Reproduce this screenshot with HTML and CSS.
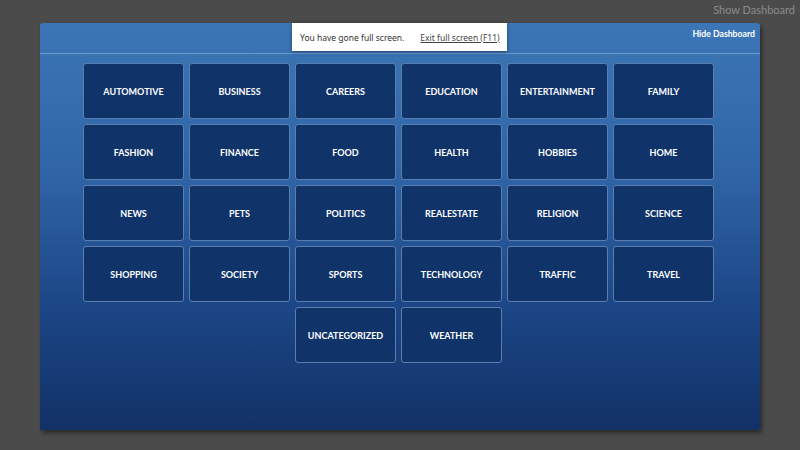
FILE: index.html
```html
<!DOCTYPE html>
<html>
<head>
<meta charset="utf-8">
<link rel="stylesheet" href="styles.css">
</head>
<body>
<div class="topbar"><span class="show">Show Dashboard</span></div>
<div class="panel">
  <div class="header"><span class="hide">Hide Dashboard</span></div>
  <div class="grid">
    <div class="tile">AUTOMOTIVE</div>
    <div class="tile">BUSINESS</div>
    <div class="tile">CAREERS</div>
    <div class="tile">EDUCATION</div>
    <div class="tile">ENTERTAINMENT</div>
    <div class="tile">FAMILY</div>
    <div class="tile">FASHION</div>
    <div class="tile">FINANCE</div>
    <div class="tile">FOOD</div>
    <div class="tile">HEALTH</div>
    <div class="tile">HOBBIES</div>
    <div class="tile">HOME</div>
    <div class="tile">NEWS</div>
    <div class="tile">PETS</div>
    <div class="tile">POLITICS</div>
    <div class="tile">REALESTATE</div>
    <div class="tile">RELIGION</div>
    <div class="tile">SCIENCE</div>
    <div class="tile">SHOPPING</div>
    <div class="tile">SOCIETY</div>
    <div class="tile">SPORTS</div>
    <div class="tile">TECHNOLOGY</div>
    <div class="tile">TRAFFIC</div>
    <div class="tile">TRAVEL</div>
    <div class="tile">UNCATEGORIZED</div>
    <div class="tile">WEATHER</div>
  </div>
</div>
<div class="toast">
  <span class="msg">You have gone full screen.</span>
  <span class="exit">Exit full screen (F11)</span>
</div>
</body>
</html>
```
FILE: styles.css
```css
html, body {
  margin: 0;
  padding: 0;
}
body {
  background: #4b4b4b;
  width: 800px;
  height: 450px;
  overflow: hidden;
  font-family: Lato, "Open Sans", sans-serif;
  position: relative;
}
.topbar {
  height: 23px;
  display: flex;
  justify-content: flex-end;
  align-items: flex-start;
}
.show {
  color: #8b8b8b;
  font-size: 11px;
  margin-top: 3px;
  margin-right: 5px;
}
.panel {
  margin-left: 40px;
  width: 720px;
  height: 407px;
  border-radius: 3px 3px 3px 0;
  background: linear-gradient(to bottom, #3c76b6 0%, #3066a8 35%, #1c4686 70%, #123166 100%);
  box-shadow: 2px 3px 4px rgba(0,0,0,0.45);
}
.header {
  height: 30px;
  border-bottom: 1px solid #6b98cc;
  display: flex;
  justify-content: flex-end;
  align-items: flex-start;
}
.hide {
  color: #fff;
  font-weight: bold;
  font-size: 8.7px;
  margin-top: 5px;
  margin-right: 5px;
}
.grid {
  margin-top: 9px;
  margin-left: 43px;
  width: 631px;
  display: flex;
  flex-wrap: wrap;
  justify-content: center;
  gap: 5px;
}
.tile {
  box-sizing: border-box;
  width: 101px;
  height: 56px;
  background: #10346a;
  border: 1px solid #5a7fae;
  border-radius: 3px;
  color: #fff;
  font-weight: bold;
  font-size: 9px;
  display: flex;
  align-items: center;
  justify-content: center;
}
.toast {
  position: absolute;
  left: 292px;
  top: 23px;
  width: 215px;
  height: 28px;
  background: #fff;
  box-shadow: 0 1px 4px rgba(0,0,0,0.4);
  display: flex;
  align-items: center;
  white-space: nowrap;
  font-family: "Noto Sans", "Open Sans", sans-serif;
  font-size: 8.5px;
  color: #333;
  box-sizing: border-box;
  padding-left: 8px;
}
.msg {
  margin-right: 16px;
}
.exit {
  text-decoration: underline;
  color: #444;
}
```
